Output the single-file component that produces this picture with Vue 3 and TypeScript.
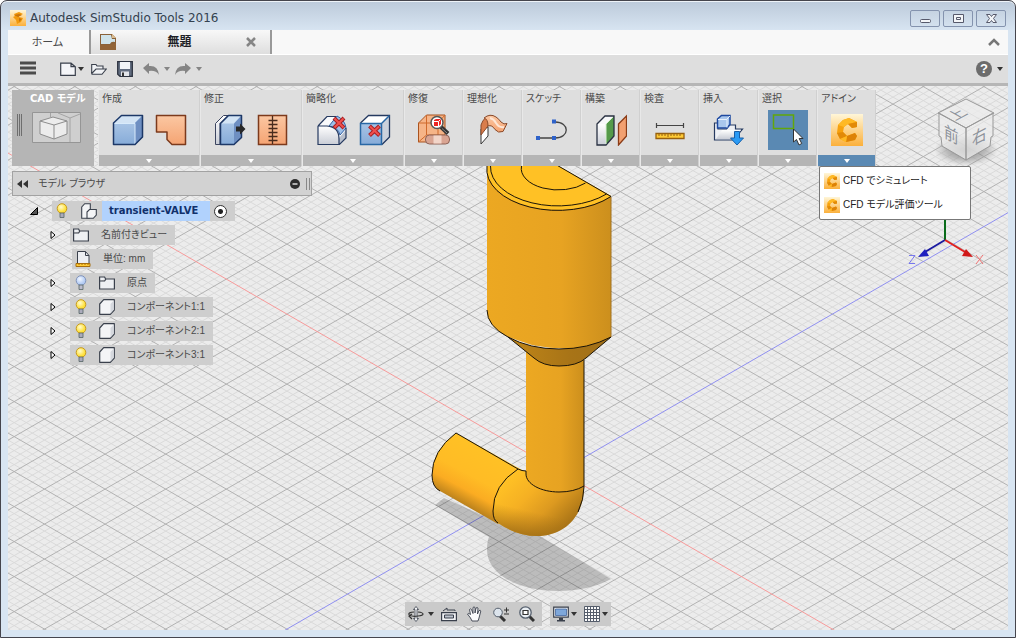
<script setup lang="ts">
import { computed, ref } from 'vue'

interface Panel {
  label: string
  icons: string[]
  wide?: boolean
  selected?: boolean
}

interface TreeNode {
  label: string
  icon: string
  bulb?: 'on' | 'off'
  expandable: boolean
}

const panels: Panel[] = [
  { label: '作成', icons: ['box', 'patch'], wide: true },
  { label: '修正', icons: ['press', 'stitch'], wide: true },
  { label: '簡略化', icons: ['fillet', 'remove'], wide: true },
  { label: '修復', icons: ['repair'] },
  { label: '理想化', icons: ['ribbon'] },
  { label: 'スケッチ', icons: ['sketch'] },
  { label: '構築', icons: ['plane'] },
  { label: '検査', icons: ['ruler'] },
  { label: '挿入', icons: ['insert'] },
  { label: '選択', icons: ['select'], selected: true },
]

const nodes: TreeNode[] = [
  { label: '名前付きビュー', icon: 'folder', expandable: true },
  { label: '単位: mm', icon: 'units', expandable: false },
  { label: '原点', icon: 'folder', bulb: 'off', expandable: true },
  { label: 'コンポーネント1:1', icon: 'body', bulb: 'on', expandable: true },
  { label: 'コンポーネント2:1', icon: 'body', bulb: 'on', expandable: true },
  { label: 'コンポーネント3:1', icon: 'body', bulb: 'on', expandable: true },
]

const tools = ['CFD でシミュレート', 'CFD モデル評価ツール']

const addinOpen = ref(true)
const treeOpen = ref(true)
const rootActive = ref('root')

// Isometric ground grid: two families of parallel lines, one major line in five.
const origin = { x: 559.7, y: 471.6 }
const slope = 0.5775
const step = 7

function gridPath(major: boolean): string {
  const left = 0
  const right = 2000
  const parts: string[] = []
  for (let k = -260; k <= 260; k++) {
    if ((k % 5 === 0) !== major || k === 0) continue
    for (const s of [slope, -slope]) {
      const at = (x: number) => (origin.y + s * (x - origin.x) + k * step).toFixed(1)
      parts.push(`M${left} ${at(left)}L${right} ${at(right)}`)
    }
  }
  return parts.join('')
}

const minorGrid = computed(() => gridPath(false))
const majorGrid = computed(() => gridPath(true))
</script>

<template>
  <div class="window">
    <svg class="defs" aria-hidden="true">
      <defs>
        <linearGradient id="gBlue" x1="0" y1="0" x2="0" y2="1"><stop offset="0" stop-color="#b4cdea" /><stop offset="1" stop-color="#86abd8" /></linearGradient>
        <linearGradient id="gOrange" x1="0" y1="0" x2="0" y2="1"><stop offset="0" stop-color="#fbc7a2" /><stop offset="1" stop-color="#f5a473" /></linearGradient>
        <linearGradient id="gGrey" x1="0" y1="0" x2="0" y2="1"><stop offset="0" stop-color="#fff" /><stop offset="1" stop-color="#c9cdd6" /></linearGradient>
        <linearGradient id="gAmber" x1="0" y1="0" x2="0" y2="1"><stop offset="0" stop-color="#fff6d8" /><stop offset="1" stop-color="#fbb03b" /></linearGradient>
        <linearGradient id="gCyl" x1="0" y1="0" x2="1" y2="0"><stop offset="0" stop-color="#eca822" /><stop offset=".6" stop-color="#e7a322" /><stop offset="1" stop-color="#cc8f1d" /></linearGradient>
        <linearGradient id="gCone" x1="0" y1="0" x2="1" y2="0"><stop offset="0" stop-color="#c08618" /><stop offset=".6" stop-color="#a87417" /><stop offset="1" stop-color="#a06f18" /></linearGradient>
        <linearGradient id="gPipe" gradientUnits="userSpaceOnUse" x1="482" y1="448" x2="454" y2="500"><stop offset="0" stop-color="#ffc125" /><stop offset=".5" stop-color="#ffbc25" /><stop offset=".75" stop-color="#fbac22" /><stop offset="1" stop-color="#b9801c" /></linearGradient>
        <linearGradient id="gElbow" gradientUnits="userSpaceOnUse" x1="508" y1="478" x2="562" y2="532"><stop offset="0" stop-color="#ffc125" /><stop offset=".35" stop-color="#f5b023" /><stop offset=".65" stop-color="#dd9a20" /><stop offset="1" stop-color="#a87316" /></linearGradient>
        <linearGradient id="gElbowV" gradientUnits="userSpaceOnUse" x1="534" y1="512" x2="528" y2="538"><stop offset="0" stop-color="#a87316" stop-opacity="0" /><stop offset="1" stop-color="#9c6b15" stop-opacity=".85" /></linearGradient>
        <radialGradient id="gShade"><stop offset="0" stop-color="#777" stop-opacity=".9" /><stop offset=".6" stop-color="#888" stop-opacity=".5" /><stop offset="1" stop-color="#999" stop-opacity="0" /></radialGradient>
        <radialGradient id="gBulb" cx=".4" cy=".35"><stop offset="0" stop-color="#fffbd0" /><stop offset="1" stop-color="#ffe13c" /></radialGradient>
        <radialGradient id="gBulbOff" cx=".4" cy=".35"><stop offset="0" stop-color="#f2f7ff" /><stop offset="1" stop-color="#b4ccf4" /></radialGradient>
      </defs>

      <symbol id="i-box" viewBox="0 0 32 32">
        <path d="M1 9l8-8h22v22l-8 8H1z" fill="url(#gBlue)" />
        <path d="M1 9l8-8h22l-8 8z" fill="#d3e4f5" /><path d="M23 9l8-8v22l-8 8z" fill="#6e8fc2" />
        <path d="M2 9.500h21V30" fill="none" stroke="#d9ebfb" />
        <path d="M1.500 9l8-7.500h21v21.500l-7.500 7.500H1.500z" fill="none" stroke="#1d3867" stroke-width="1.500" stroke-linejoin="round" />
      </symbol>
      <symbol id="i-patch" viewBox="0 0 32 32">
        <path d="M1.500 1.500h29v29H17l-5-5v-7.500H1.500z" fill="url(#gOrange)" stroke="#7c3a1c" stroke-width="1.500" stroke-linejoin="round" />
      </symbol>
      <symbol id="i-press" viewBox="0 0 32 32">
        <path d="M1.500 9.500l8-8H14l-8 8v21H1.500z" fill="url(#gGrey)" stroke="#3c4560" />
        <path d="M6.500 9.500l8-8h13v22l-7.500 7H6.500z" fill="url(#gBlue)" />
        <path d="M6.500 9.500l8-8h13l-7.500 8z" fill="#d3e4f5" /><path d="M20 9.500l7.500-8v22l-7.500 7z" fill="#6e8fc2" />
        <path d="M6.500 9.500l8-8h13v22l-7.500 7H6.500z" fill="none" stroke="#1d3867" stroke-width="1.500" stroke-linejoin="round" />
        <path d="M22 12.500h4V9.500l5.500 5.500-5.500 5.500v-3h-4z" fill="#282828" />
      </symbol>
      <symbol id="i-stitch" viewBox="0 0 32 32">
        <path d="M1.500 1.500h28v29h-28z" fill="url(#gOrange)" stroke="#7c3a1c" stroke-width="1.500" />
        <path d="M15.500 2v28M11.500 6.500h9M11.500 10.500h9M11.500 14.500h9M11.500 18.500h9M11.500 22.500h9M11.500 26.500h9" stroke="#4a2c1d" fill="none" stroke-width="1.300" />
      </symbol>
      <symbol id="i-fillet" viewBox="0 0 32 32">
        <path d="M2 12l9-9h10l9 11v10l-6 6H2z" fill="#f9fafc" />
        <path d="M13 12l8-10q8 4 9 12l-6 7q-2-8-11-9z" fill="#9fc0e8" stroke="#3061a5" />
        <path d="M2 12h9q12 1 12 13v5.500H2z" fill="url(#gGrey)" />
        <path d="M23 24l7-8v8l-7 6.500z" fill="#b8bfcc" />
        <path d="M2 12l9-9.500h9M2 12v18.500h21.500l6.500-6.500V14M2 12h9q12 1 12 13v5" fill="none" stroke="#263a60" stroke-width="1.200" />
        <path d="M18 4l10 10m0-10L18 14" stroke="#a81f22" stroke-width="4" /><path d="M18.500 4.500l9 9m0-9l-9 9" stroke="#f0504e" stroke-width="2" />
      </symbol>
      <symbol id="i-remove" viewBox="0 0 32 32">
        <path d="M1 9l8-8h22v22l-8 8H1z" fill="url(#gBlue)" />
        <path d="M1 9l8-8h22l-8 8z" fill="#fff" /><path d="M23 9l8-8v22l-8 8z" fill="#ccd1dc" />
        <path d="M1.500 9l8-7.500h21v21.500l-7.500 7.500" fill="none" stroke="#263a60" stroke-width="1.300" />
        <path d="M1.500 9.500H22.500v21h-21zM22.500 9.500l8-8" fill="none" stroke="#2867a5" stroke-width="1.500" />
        <path d="M10.500 12l10 9.500m0-9.500l-10 9.500" stroke="#a81f22" stroke-width="4" /><path d="M11 12.500l9 8.500m0-8.500l-9 8.500" stroke="#f0504e" stroke-width="2" />
      </symbol>
      <symbol id="i-repair" viewBox="0 0 32 32">
        <path d="M.500 9l8-8H27v20l-7 7H.500z" fill="#f6b487" stroke="#a9531f" />
        <path d="M.500 9H20v19M20 9l7-8M8.500 1v20l-8 7M8.500 21H27" fill="none" stroke="#cf6a2d" />
        <path d="M23 13l7 6.500" stroke="#333" stroke-width="4" /><path d="M24 14.500l5 4.500" stroke="#888" />
        <circle cx="19" cy="8.500" r="6" fill="#fff" stroke="#555" stroke-width="1.500" />
        <path d="M16 6l2-1h5v5l-2 2h-5z" fill="#ee2522" /><path d="M16 7.500h4.500V12m0-4.500l2-2" stroke="#fff" fill="none" />
        <rect x="7.500" y="21" width="24" height="9" rx="4" fill="#d9a492" stroke="#8d6257" />
        <rect x="15.500" y="21.500" width="8" height="8" fill="#f2d5c9" />
      </symbol>
      <symbol id="i-ribbon" viewBox="0 0 32 32">
        <path d="M4 15v15l7-8v-9z" fill="#fff" stroke="#333" />
        <path d="M4 21V11Q7 2 14 2q4 1 6 6-7-1-9 4z" fill="#d97d4c" stroke="#8a4a2a" />
        <path d="M7 4q6-5 12-1 3 2 5 5 3 3 6 1.500l-4 8q-5 2-8-2-3-5-7-3.500Q11 5 7 4z" fill="url(#gOrange)" stroke="#8a4a2a" />
        <path d="M13 4q4 1 6 5 3 5 8 4" stroke="#fde6d5" stroke-width="2" fill="none" />
      </symbol>
      <symbol id="i-sketch" viewBox="0 0 32 32">
        <path d="M2 24h17c15 0 15-16 0-16" fill="none" stroke="#444" stroke-width="1.300" />
        <path d="M0 22h4v4H0zM16 22h4v4h-4zM16 5.500h4v4h-4z" fill="#2f62c9" />
      </symbol>
      <symbol id="i-plane" viewBox="0 0 32 32">
        <path d="M2 10l8-8h8v21l-7 8H2z" fill="#f7f8fa" />
        <path d="M2 10h9v21H2z" fill="url(#gGrey)" /><path d="M11 10l8-8v20l-8 9z" fill="#549a4a" />
        <path d="M2 10l8-8h9v20l-8 9H2z" fill="none" stroke="#293142" stroke-width="1.300" /><path d="M11 10l7-7M11 10v20" stroke="#d9efd4" />
        <path d="M23.500 10l8-8v20l-8 9z" fill="#f2a070" stroke="#8b3c17" stroke-width="1.300" />
      </symbol>
      <symbol id="i-ruler" viewBox="0 0 32 32">
        <path d="M2 11.500h28M2.500 9v5M29.500 9v5" stroke="#444" fill="none" stroke-width="1.200" />
        <path d="M2 19.500h28v5H2z" fill="#ffcb35" stroke="#96600f" stroke-width="1.300" />
        <path d="M5 20v2M8 20v2M11 20v2M14 20v3M17 20v2M20 20v2M23 20v2M26 20v2" stroke="#96600f" />
      </symbol>
      <symbol id="i-insert" viewBox="0 0 32 32">
        <path d="M1.500 9v17h19l9-11h-7v-4h-6l-3 4H5V9z" fill="#eef0f4" stroke="#263a60" stroke-width="1.200" />
        <path d="M3 25l6-9h19l-7 9z" fill="url(#gGrey)" />
        <path d="M4.500 5l4-3.500h8.500v9l-3 3.500H4.500z" fill="#a9c7ed" stroke="#1e49a0" stroke-width="1.500" /><path d="M5 5.500h9v8M14 5l3-3" fill="none" stroke="#e7f1fd" />
        <path d="M21.500 17.500h5V24h4l-6.500 7-6.500-7h4z" fill="#2b9bf4" stroke="#185fa8" />
      </symbol>
      <symbol id="i-select" viewBox="0 0 32 32">
        <path d="M1.500 1h20v13.500h-20z" fill="none" stroke="#62a60a" stroke-width="1.500" />
        <path d="M21.500 15v13l3-2.500 2.500 5.500 2.700-1.500-2.500-5H31z" fill="#fff" stroke="#333" />
      </symbol>
      <symbol id="i-cfd" viewBox="0 0 32 32">
        <path d="M0 0h32v32H0z" fill="url(#gAmber)" />
        <path d="M18 4l8 4v5l-5 1-4-4-4 3-1 5 4 4 8-3 2 3-2 4-9 2-6-3-3-6 1-8 5-5z" fill="#f7a10d" />
        <path d="M18 4l8 4-9 2-4 3-6-2 5-5z" fill="#ffb924" /><path d="M26 8v5l-5 1-4-4z" fill="#e28a08" />
        <path d="M6 19l6-1 4 4-7 3z" fill="#e28a08" /><path d="M16 22l8-3 2 3-2 4-9 2z" fill="#dd8206" /><path d="M9 25l7-3-1 6z" fill="#ffb924" />
      </symbol>
      <symbol id="i-app" viewBox="0 0 16 16">
        <path d="M0 0h16v16H0z" fill="url(#gAmber)" />
        <path d="M4 4l5-2 4 2-4 2v1l4 1-2 4-4 2-1-4-3-3 2-1z" fill="#f39a0c" /><path d="M4 5l5-1 3 1-4 2zM9 8l3 1-3 3z" fill="#c97409" />
      </symbol>

      <symbol id="i-bulb-on" viewBox="0 0 12 16">
        <circle cx="6" cy="5.500" r="4.800" fill="url(#gBulb)" stroke="#c79a1c" /><path d="M4 10h4v4.500H4z" fill="#aab" stroke="#566" stroke-width=".8" />
      </symbol>
      <symbol id="i-bulb-off" viewBox="0 0 12 16">
        <circle cx="6" cy="5.500" r="4.800" fill="url(#gBulbOff)" stroke="#8093ba" /><path d="M4 10h4v4.500H4z" fill="#bbc" stroke="#566" stroke-width=".8" />
      </symbol>
      <symbol id="i-folder" viewBox="0 0 16 16">
        <path d="M.600 14V2h5l1 2h8.800v10zM.600 6h5l1.400-2" fill="#eef0f3" stroke="#3a404c" stroke-width="1.200" />
      </symbol>
      <symbol id="i-units" viewBox="0 0 16 16">
        <path d="M2.500 12V.500h8l3.500 4V12" fill="#eceef2" stroke="#3a404c" /><path d="M10.500.500v4H14" fill="none" stroke="#3a404c" />
        <path d="M1 12.500h14v3H1z" fill="#ffcb35" stroke="#a66d0c" /><path d="M4 13v1M7 13v1M10 13v1M13 13v1" stroke="#a66d0c" />
      </symbol>
      <symbol id="i-body" viewBox="0 0 16 16">
        <path d="M.700 5l4-4.300h10.600V11l-4 4.300H.700z" fill="#f3f4f6" stroke="#3a404c" stroke-width="1.200" stroke-linejoin="round" /><path d="M11.500 5l3.300-3.500v9.300l-3.300 3.700z" fill="#d5d8de" />
      </symbol>
      <symbol id="i-assembly" viewBox="0 0 16 16">
        <path d="M.700 4l3-3.300h5.600V7l-1 8.300H.700z" fill="#f3f4f6" stroke="#3a404c" stroke-width="1.100" />
        <path d="M6 9l2.500-2.500h6.800V12l-3 3.300H6z" fill="#f3f4f6" stroke="#3a404c" stroke-width="1.100" />
      </symbol>

      <symbol id="i-new" viewBox="0 0 16 16"><path d="M.700 2.200H11l4.300 3.500v8.600H.700zM11 2.200v3.500h4" fill="#f4f5f8" stroke="#3a404c" stroke-width="1.200" /></symbol>
      <symbol id="i-open" viewBox="0 0 16 16"><path d="M.700 12.500V3.500H5l1 1.500h6v3M.700 12.500L5 8h10.300L11 13.300H1z" fill="#f0f2f5" stroke="#3a404c" stroke-width="1.100" /></symbol>
      <symbol id="i-save" viewBox="0 0 16 16"><path d="M.700.700h14.600v14.600H3l-2.300-2z" fill="#626d80" stroke="#2e3441" stroke-width="1.300" /><path d="M3 1h10v7H3z" fill="#f3f5f8" /><path d="M4 10.500h8V15H4z" fill="#e2e5ea" /><path d="M5 11.500h2V15H5z" fill="#333" /></symbol>
      <symbol id="i-undo" viewBox="0 0 16 16"><path d="M0 7l6-5v3q9-1 10 9-3-5-10-4v3z" fill="#858585" /></symbol>
      <symbol id="i-redo" viewBox="0 0 16 16"><path d="M16 7l-6-5v3Q1 4 0 14q3-5 10-4v3z" fill="#858585" /></symbol>

      <symbol id="i-orbit" viewBox="0 0 16 16"><path d="M8 .500L5.500 3.500H7v9H5.500L8 15.500l2.500-3H9v-9h1.500z" fill="#f4f5f7" stroke="#3a404c" stroke-width=".8" /><path d="M6 6Q0 6.500 1 8.500q2 2.500 9 1.500 5-.500 5-2 0-1.500-5-2M4 13l-3-3 3-2" fill="none" stroke="#333" stroke-width="1.200" /></symbol>
      <symbol id="i-look" viewBox="0 0 16 16"><path d="M.600 6.600h14.800v8H.600z" fill="#f1f2f5" stroke="#3a404c" stroke-width="1.200" /><path d="M3.500 9h9v3h-9z" fill="#bcc2cc" stroke="#3a404c" /><path d="M2 5l4-3v2h8v1" fill="none" stroke="#3a404c" /></symbol>
      <symbol id="i-hand" viewBox="0 0 16 16"><path d="M5 15l-1.500-3L.500 8q1-1.500 3 .500L2.500 3.500q1-1.200 2 0l1.500 4V1.500q1-1.200 2 0v5.500l1-5q1.200-1 2 0l-.500 6 1.500-3.500q1.500-.700 1.800.500L12 12l-1 3z" fill="#fbfbfc" stroke="#3a404c" stroke-width=".9" /></symbol>
      <symbol id="i-zoom" viewBox="0 0 16 16"><path d="M7 10l5 5" stroke="#333" stroke-width="3" /><circle cx="5" cy="6.500" r="4.300" fill="#dce4ec" stroke="#56606e" /><path d="M11 4h5M13.500 1.500v5M11 8h5" stroke="#333" /></symbol>
      <symbol id="i-fit" viewBox="0 0 16 16"><path d="M10 10l5 5" stroke="#333" stroke-width="3" /><circle cx="6.500" cy="6.500" r="5.700" fill="#e9eef3" stroke="#56606e" stroke-width="1.300" /><path d="M4 4.500h5v4H4z" fill="#fff" stroke="#333" stroke-width="1.200" /></symbol>
      <symbol id="i-monitor" viewBox="0 0 16 16"><path d="M.700 1.200h14.600v10H.700z" fill="#f3f5f8" stroke="#3a404c" stroke-width="1.200" /><path d="M2.500 3h11v6.500h-11z" fill="#7ea7da" stroke="#43659c" stroke-width=".8" /><path d="M6 12h4v2h2v1.500H4V14h2z" fill="#3a404c" /></symbol>
      <symbol id="i-grid" viewBox="0 0 16 16"><path d="M.500.500h15v15H.500z" fill="#fafafa" /><path d="M.500.500h15v15H.500zM3.500 0v16M6.500 0v16M9.500 0v16M12.500 0v16M0 3.500h16M0 6.500h16M0 9.500h16M0 12.500h16" fill="none" stroke="#555d6b" /></symbol>
    </svg>

    <header class="titlebar">
      <svg class="ico16"><use href="#i-app" /></svg>
      <h1>Autodesk SimStudio Tools 2016</h1>
      <div class="winbtns">
        <button type="button" aria-label="最小化"><svg viewBox="0 0 28 15"><rect x="9.500" y="8.500" width="10" height="3" rx="1" /></svg></button>
        <button type="button" aria-label="最大化"><svg viewBox="0 0 28 15"><path d="M9.500 3.500h10v8h-10zM12.500 6.500h4v2h-4z" /></svg></button>
        <button type="button" aria-label="閉じる"><svg viewBox="0 0 28 15"><path d="M9.500 3.500H13l1.500 2 1.500-2h3.500l-3 4 3 4H16l-1.500-2-1.500 2H9.500l3-4z" /></svg></button>
      </div>
    </header>

    <nav class="tabs">
      <button type="button" class="tab home">ホーム</button>
      <div class="tab active">
        <svg class="ico16" viewBox="0 0 16 16"><path d="M0 0h12l4 4v12H0z" fill="#8a6138" /><path d="M1 1h10l1 4h3v3q-4-1-5 2H1z" fill="#cfe3ea" /><path d="M12 0l4 4h-4z" fill="#d8b98c" /><path d="M0 11h9l7-2v7H0z" fill="#926437" /></svg>
        <button type="button" class="doc">無題</button>
        <button type="button" class="close" aria-label="タブを閉じる"><svg viewBox="0 0 10 10"><path d="M1 1l8 8M9 1L1 9" stroke="#858585" stroke-width="2.500" /></svg></button>
      </div>
      <button type="button" class="collapse" aria-label="折りたたむ"><svg viewBox="0 0 12 8"><path d="M1 7l5-5 5 5" fill="none" stroke="#777" stroke-width="2.500" /></svg></button>
    </nav>

    <div class="quickbar">
      <button type="button" class="burger" aria-label="メニュー"><svg viewBox="0 0 18 14"><path d="M1 2h16M1 7h16M1 12h16" stroke="#4c4c4c" stroke-width="3" /></svg></button>
      <button type="button" class="q drop" aria-label="新規"><svg class="ico16"><use href="#i-new" /></svg><i></i></button>
      <button type="button" class="q" aria-label="開く"><svg class="ico16"><use href="#i-open" /></svg></button>
      <button type="button" class="q" aria-label="保存"><svg class="ico16"><use href="#i-save" /></svg></button>
      <button type="button" class="q drop soft" aria-label="元に戻す"><svg class="ico16"><use href="#i-undo" /></svg><i></i></button>
      <button type="button" class="q drop soft" aria-label="やり直し"><svg class="ico16"><use href="#i-redo" /></svg><i></i></button>
      <button type="button" class="help" aria-label="ヘルプ"><span>?</span><i></i></button>
    </div>

    <main class="workspace">
      <svg class="scene" viewBox="8 86 1000 544" preserveAspectRatio="xMinYMin slice" aria-hidden="true">
        <path :d="minorGrid" class="minor" />
        <path :d="majorGrid" class="major" />
        <path d="M0 148.400L1200 841.400" stroke="#f79a9a" />
        <path d="M0 794.800L1200 101.800" stroke="#8f8ff0" />

        <path d="M435 505l9-7 60 27 36 11 71 43q-22 12-53 12c-42 0-71-18-71-41q0-9 2-13z" fill="#000" fill-opacity=".2" />

        <path d="M456 433L522 470l4 30-28 24-58-33q-8-4-8-16 0-24 24-42z" fill="url(#gPipe)" />
        <path d="M518 469q4 2 8 2h58v16c0 30-20 49-47 49q-20 0-39-13-5-3-5-12 0-26 25-42z" fill="url(#gElbow)" />
        <path d="M518 469q4 2 8 2h58v16c0 30-20 49-47 49q-20 0-39-13-5-3-5-12 0-26 25-42z" fill="url(#gElbowV)" />
        <path d="M526 350v124c0 10 15 18 33 18q15 0 25-6V350z" fill="url(#gCyl)" />
        <path d="M487 160v150q0 16 21 27l24 8q54 10 79-8V196L548 160z" fill="url(#gCyl)" />
        <path d="M508 337q22 12 51 12t52-12l-25 21q-9 8-27 8-16 0-25-8z" fill="url(#gCone)" />
        <path d="M487 160v8a71 41 0 0 0 124 28L548 160z" fill="#ffc125" />
        <g class="edge">
          <path d="M487 166a71 41 0 0 0 124 30.500L548 160M490.500 166a67.500 39 0 0 0 116 28M521.500 166a37 21.500 0 0 0 64 17" />
          <path d="M487 310q0 16 21 27 22 12 51 12t52-12M508 337l26 21q9 8 25 8 18 0 27-8l25-21" />
          <path d="M526 474c0 10 15 18 33 18q15 0 25-6" />
          <path d="M440 491q-8-4-8-16 0-24 24-42l62 36q4 2 8 2v3M518 469q-25 16-25 42 0 9 5 12M584 360v127q0 12-6 25" />
          <path d="M611 197v140" class="faint" />
        </g>

        <ellipse cx="966" cy="150" rx="32" ry="16" fill="url(#gShade)" />
        <g class="viewcube">
          <path d="M938 113l28-14 28 14-28 15zM939 113l27 15v32l-24-14-1-9-2-1zM993 113l-27 15v32l24-14 1-9 2-1z" />
          <text transform="matrix(.86 .45 0 1 944 137)">前</text>
          <text transform="matrix(.86 -.45 0 1 972 146)">右</text>
          <text transform="matrix(.8 -.44 .8 .45 955 121)">上</text>
        </g>

        <g class="triad">
          <path d="M945 240v-24" stroke="#0a6b1a" stroke-width="2" />
          <path d="M945 240l-20 12" stroke="#1a1aa0" stroke-width="2" /><path d="M918 257l7-8 4 7z" fill="#2020c0" />
          <path d="M945 240l20 12" stroke="#e02020" stroke-width="2" /><path d="M973 257l-7-8-4 7z" fill="#d01818" />
          <path d="M909 255.500h6l-6 8h6" fill="none" stroke="#7777ee" /><path d="M976 255l7 9M983 255l-7 9" stroke="#f07070" />
        </g>
      </svg>

      <div class="overlay">
        <section class="ribbon">
          <button type="button" class="mode">
            <span>CAD モデル</span>
            <svg viewBox="0 0 66 32">
              <path d="M1.500 2v22M3.500 2v22M5.500 2v22" stroke="#6e6e6e" />
              <path d="M16.500.500h48v30h-48z" fill="#cfcfcf" stroke="#959595" /><path d="M34.500 1v4M42 1l12 5 10-4M54 6v24" stroke="#a4a4a4" fill="none" />
              <path d="M24 9l13-4 14 4v13l-13 5-14-5z" fill="#ececec" stroke="#8d8d8d" /><path d="M24 9l14 4 13-4M38 13v14" fill="none" stroke="#8d8d8d" />
            </svg>
          </button>
          <div v-for="p in panels" :key="p.label" class="panel" :class="{ wide: p.wide }">
            <h2>{{ p.label }}</h2>
            <div class="icons">
              <button v-for="i in p.icons" :key="i" type="button" class="big" :class="{ on: p.selected }" :aria-label="p.label">
                <svg><use :href="'#i-' + i" /></svg>
              </button>
            </div>
            <button type="button" class="more" :aria-label="p.label + ' メニュー'"><i></i></button>
          </div>
          <div class="panel addin">
            <h2>アドイン</h2>
            <div class="icons"><button type="button" class="big" aria-label="アドイン"><svg><use href="#i-cfd" /></svg></button></div>
            <button type="button" class="more open" aria-label="アドイン メニュー" @click="addinOpen = !addinOpen"><i></i></button>
            <ul v-if="addinOpen" class="menu">
              <li v-for="t in tools" :key="t"><button type="button"><svg class="ico16"><use href="#i-cfd" /></svg>{{ t }}</button></li>
            </ul>
          </div>
        </section>

        <section class="browser">
          <header>
            <svg class="rew" viewBox="0 0 11 8"><path d="M5 0v8L0 4zM11 0v8L6 4z" fill="#333" /></svg>
            <h2>モデル ブラウザ</h2>
            <button type="button" aria-label="折りたたむ" @click="treeOpen = !treeOpen"><svg viewBox="0 0 10 10"><circle cx="5" cy="5" r="5" fill="#2e2e2e" /><path d="M2.500 5h5" stroke="#ddd" stroke-width="1.500" /></svg></button>
            <span class="grip"></span>
          </header>
          <ul v-if="treeOpen" class="tree">
            <li class="root">
              <svg class="tw" viewBox="0 0 8 8"><path d="M7.500.500v7H.500z" fill="#555" stroke="#000" /></svg>
              <div class="row">
                <svg class="bulb"><use href="#i-bulb-on" /></svg>
                <svg class="ico16"><use href="#i-assembly" /></svg>
                <label for="root-active">transient-VALVE</label>
                <input id="root-active" v-model="rootActive" type="radio" value="root" />
              </div>
            </li>
            <li v-for="n in nodes" :key="n.label">
              <svg class="tw" viewBox="0 0 6 8"><path v-if="n.expandable" d="M1 .500v7l4-3.500z" fill="#fff" stroke="#000" /></svg>
              <div class="row" :class="n.icon">
                <svg v-if="n.bulb" class="bulb"><use :href="'#i-bulb-' + n.bulb" /></svg>
                <svg class="ico16"><use :href="'#i-' + n.icon" /></svg>
                <span>{{ n.label }}</span>
              </div>
            </li>
          </ul>
        </section>

        <div class="navbar">
          <div class="group">
            <button type="button" class="drop" aria-label="オービット"><svg class="ico16"><use href="#i-orbit" /></svg><i></i></button>
            <button type="button" aria-label="ビュー正面"><svg class="ico16"><use href="#i-look" /></svg></button>
            <button type="button" aria-label="画面移動"><svg class="ico16"><use href="#i-hand" /></svg></button>
            <button type="button" aria-label="ズーム"><svg class="ico16"><use href="#i-zoom" /></svg></button>
            <button type="button" aria-label="フィット"><svg class="ico16"><use href="#i-fit" /></svg></button>
          </div>
          <div class="group tight">
            <button type="button" class="drop" aria-label="表示設定"><svg class="ico16"><use href="#i-monitor" /></svg><i></i></button>
            <button type="button" class="drop" aria-label="グリッド"><svg class="ico16"><use href="#i-grid" /></svg><i></i></button>
          </div>
        </div>
      </div>
    </main>
  </div>
</template>

<style>
html,
body {
  margin: 0;
  background: #fff;
}
</style>

<style scoped>
.window {
  box-sizing: border-box;
  min-height: 100vh;
  display: flex;
  flex-direction: column;
  padding: 0 7px 7px;
  border: 1px solid #45454d;
  border-radius: 7px 7px 0 0;
  background: linear-gradient(#bccada, #d8e5f2 30px);
  box-shadow: inset 0 1px #eef3f8;
  font-family: "Liberation Sans", "Noto Sans CJK JP", sans-serif;
  font-size: 10px;
  line-height: 16px;
  color: #4a4a4a;
  font-feature-settings: "palt";
}
.defs {
  position: absolute;
  width: 0;
  height: 0;
}
button {
  font: inherit;
  font-feature-settings: inherit;
  color: inherit;
  background: none;
  border: 0;
  padding: 0;
  cursor: pointer;
}
svg {
  display: block;
  flex: none;
}
.ico16 {
  width: 16px;
  height: 16px;
}
h1,
h2,
ul {
  margin: 0;
  padding: 0;
  list-style: none;
  font-weight: normal;
  font-size: inherit;
}
i {
  width: 0;
  border: 3px solid transparent;
  border-top: 4px solid #333;
  border-bottom: 0;
}

.titlebar {
  height: 29px;
  display: flex;
  align-items: center;
  gap: 4px;
  padding: 5px 2px 0;
  box-sizing: border-box;
}
.titlebar h1 {
  flex: 1;
  font-family: "DejaVu Sans", sans-serif;
  font-size: 12px;
  color: #33414f;
}
.winbtns {
  display: flex;
  gap: 3px;
}
.winbtns button {
  width: 30px;
  height: 17px;
  box-sizing: border-box;
  border: 1px solid #8493ae;
  border-radius: 2px;
}
.winbtns svg {
  width: 28px;
  height: 15px;
  fill: #f3f5f8;
  stroke: #56596b;
}

.tabs {
  height: 24px;
  display: flex;
  background: #f8f8f8;
  border-bottom: 1px solid #fff;
}
.tab {
  box-sizing: border-box;
  border-right: 2px solid #999;
}
.home {
  width: 83px;
  padding-right: 2px;
  font-size: 11px;
}
.active {
  width: 181px;
  display: flex;
  align-items: center;
  padding: 0 14px 0 9px;
  background: linear-gradient(#f8f8f8, #dedede);
}
.doc {
  flex: 1;
  font-size: 12px;
  font-weight: bold;
  color: #1e1e26;
  padding-right: 3px;
}
.close svg {
  width: 10px;
  height: 10px;
}
.collapse {
  margin-left: auto;
  padding: 0 8px;
}
.collapse svg {
  width: 12px;
  height: 8px;
}

.quickbar {
  height: 28px;
  display: flex;
  align-items: center;
  gap: 10px;
  padding: 0 5px 0 11px;
  background: #dedede;
  border-bottom: 3px solid #b6b6b6;
}
.burger {
  margin: 0 13px 2px 0;
}
.burger svg {
  width: 18px;
  height: 14px;
}
.drop {
  display: flex;
  align-items: center;
  gap: 2px;
}
.quickbar .drop {
  margin-right: -3px;
}
.quickbar .soft {
  gap: 5px;
  margin-right: -5px;
}
.soft i {
  border-top-color: #858585;
}
.help {
  margin-left: auto;
  display: flex;
  align-items: center;
  gap: 5px;
}
.help span {
  width: 16px;
  border-radius: 50%;
  background: #6c6c6c;
  color: #fff;
  font-weight: bold;
  font-size: 13px;
}

.workspace {
  flex: 1;
  position: relative;
  display: flex;
  background: #ececec;
  overflow: hidden;
}
.scene {
  position: absolute;
  inset: 0;
  width: 100%;
  height: 100%;
}
.minor {
  stroke: #dadada;
}
.major {
  stroke: #b2b2b2;
}
.edge {
  fill: none;
  stroke: #1b1408;
}
.faint {
  stroke: #a07020;
}
.viewcube path {
  fill: #ececec;
  fill-opacity: 0.75;
  stroke: #999;
}
.viewcube text {
  font-size: 17px;
  fill: #8d929a;
}
.overlay {
  position: relative;
  flex: 1;
  display: flex;
  flex-direction: column;
  padding: 4px;
}

.ribbon {
  display: flex;
}
.mode {
  width: 82px;
  margin-right: 4px;
  background: #b5b5b5;
  color: #fff;
  font-family: "DejaVu Sans", "Noto Sans CJK JP", sans-serif;
  font-weight: bold;
  display: flex;
  flex-direction: column;
  align-items: flex-start;
}
.mode span {
  padding: 1px 0 5px 18px;
}
.mode svg {
  width: 66px;
  height: 32px;
  margin-left: 4px;
}
.panel {
  position: relative;
  box-sizing: border-box;
  width: 59px;
  height: 76px;
  display: flex;
  flex-direction: column;
  background: #dedede;
  border-right: 1px solid #d0d0d0;
  border-left: 1px solid #e8e8e8;
}
.wide {
  width: 102px;
}
.panel h2 {
  padding: 1px 3px 2px;
  white-space: nowrap;
}
.icons {
  flex: 1;
  display: flex;
  justify-content: center;
  gap: 11px;
}
.big {
  width: 32px;
  padding: 4px 0 9px;
}
.big svg {
  width: 32px;
  height: 32px;
}
.on {
  width: 40px;
  height: 40px;
  margin-top: 1px;
  padding: 4px;
  background: #5a89b3;
}
.more {
  height: 11px;
  display: flex;
  align-items: center;
  justify-content: center;
  background: #b5b5b5;
}
.more i {
  border-top-color: #fff;
}
.open {
  background: #5a89b3;
}
.menu {
  position: absolute;
  z-index: 2;
  top: 76px;
  left: 1px;
  width: 150px;
  border: 1px solid #777;
  border-radius: 2px;
  background: #fff;
  padding: 2px 0;
  color: #222;
}
.menu button {
  display: flex;
  align-items: center;
  gap: 3px;
  width: 100%;
  height: 24px;
  padding-left: 4px;
  white-space: nowrap;
}

.browser header {
  box-sizing: border-box;
  width: 300px;
  height: 25px;
  margin-top: 5px;
  display: flex;
  align-items: center;
  padding: 0 1px 0 4px;
  background: #d2d2d2;
  border: 1px solid #a2a2a2;
}
.rew {
  width: 11px;
  height: 8px;
}
.browser h2 {
  flex: 1;
  padding-left: 10px;
}
.browser header svg {
  height: 10px;
}
.browser header button svg {
  width: 10px;
}
.grip {
  width: 2px;
  height: 12px;
  margin-left: 6px;
  border: solid #888;
  border-width: 0 1px;
}
.tree {
  padding-top: 5px;
}
.tree li {
  height: 20px;
  margin-bottom: 4px;
  display: flex;
  align-items: center;
  padding-left: 38px;
}
.tree .root {
  padding-left: 18px;
}
.tw {
  width: 6px;
  height: 8px;
  margin-right: 14px;
}
.root .tw {
  width: 8px;
}
.row {
  height: 20px;
  display: flex;
  align-items: center;
  padding: 0 8px 0 3px;
  background: #cecece;
  white-space: nowrap;
}
.units {
  margin-left: 2px;
}
.bulb {
  width: 12px;
  height: 16px;
  margin: 0 12px 0 2px;
}
.row span {
  padding-left: 12px;
}
.row label {
  height: 20px;
  line-height: 20px;
  margin-left: 5px;
  padding: 0 12px 0 7px;
  background: #b1d2fd;
  color: #10306c;
  font-family: "DejaVu Sans", sans-serif;
  font-weight: bold;
}
.root .bulb {
  margin: 0 13px 0 1px;
}
.row input {
  appearance: none;
  width: 13px;
  height: 13px;
  margin: 0 0 0 4px;
  border: 1px solid #333;
  border-radius: 50%;
  background: radial-gradient(#222 2px, #fff 3px);
}

.navbar {
  margin-top: auto;
  display: flex;
  justify-content: center;
  gap: 8px;
}
.group {
  height: 24px;
  display: flex;
  align-items: center;
  gap: 10px;
  padding: 0 7px 0 3px;
  background: #cacaca;
}
.group .drop {
  gap: 4px;
  margin-right: -3px;
}
.tight {
  gap: 7px;
  padding: 0 3px;
}
.tight .drop {
  gap: 2px;
  margin-right: 0;
}
</style>
